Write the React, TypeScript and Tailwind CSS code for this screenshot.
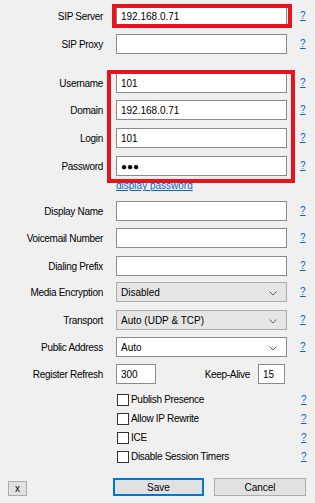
import React from 'react';

const font = { fontFamily: '"Liberation Sans", Arial, sans-serif' };

const Help: React.FC = () => (
  <a className="ml-[13px] text-[10px] text-[#0066cc] underline leading-none">?</a>
);

const Chevron: React.FC = () => (
  <svg width="8" height="5" viewBox="0 0 8 5" className="absolute right-[9px] top-[8px]">
    <path d="M0.5 0.5 L4 4 L7.5 0.5" fill="none" stroke="#606060" strokeWidth="1" />
  </svg>
);

type FieldProps = {
  label: string;
  value?: string;
  kind?: 'text' | 'select' | 'combo';
  className?: string;
};

const Field: React.FC<FieldProps> = ({ label, value = '', kind = 'text', className = '' }) => {
  const box =
    kind === 'select'
      ? 'bg-[#e5e5e5] border-[#adadad]'
      : 'bg-white border-[#8a8a8a]';
  return (
    <div className={`flex items-center h-5 ${className}`}>
      <div className="w-[103px] text-right text-[10px] tracking-[-0.3px] text-black whitespace-nowrap">{label}</div>
      <div className={`relative ml-[13px] w-[171px] h-5 border ${box} flex items-center pl-[4px] text-[10px] text-black`}>
        {value}
        {kind !== 'text' && <Chevron />}
      </div>
      <Help />
    </div>
  );
};

const Check: React.FC<{ label: string }> = ({ label }) => (
  <div className="flex items-center h-[19px]">
    <div className="w-[117px]" />
    <div className="w-[12px] h-[12px] border border-[#333] bg-white" />
    <div className="ml-[2px] w-[170px] text-[10px] tracking-[-0.3px] text-black">{label}</div>
    <a className="text-[10px] text-[#0066cc] underline leading-none">?</a>
  </div>
);

const App: React.FC = () => {
  return (
    <div className="relative w-[315px] h-[503px] bg-[#f0f0f0] overflow-hidden" style={font}>
      <div className="flex flex-col pt-[6px]">
        <Field label="SIP Server" value="192.168.0.71" />
        <Field label="SIP Proxy" className="mt-[8px]" />
        <Field label="Username" value="101" className="mt-[19px]" />
        <Field label="Domain" value="192.168.0.71" className="mt-[7px]" />
        <Field label="Login" value="101" className="mt-[8px]" />
        <Field label="Password" value="●●●" className="mt-[8px]" />
        <div className="h-[12px] mt-[4px] pl-[116px] text-[10px] leading-[12px] text-[#0066cc] underline">
          display password
        </div>
        <Field label="Display Name" className="mt-[9px]" />
        <Field label="Voicemail Number" className="mt-[7px]" />
        <Field label="Dialing Prefix" className="mt-[8px]" />
        <Field label="Media Encryption" value="Disabled" kind="select" className="mt-[6px]" />
        <Field label="Transport" value="Auto (UDP & TCP)" kind="select" className="mt-[8px]" />
        <Field label="Public Address" value="Auto" kind="combo" className="mt-[7px]" />

        <div className="flex items-center h-5 mt-[7px]">
          <div className="w-[103px] text-right text-[10px] tracking-[-0.3px] text-black whitespace-nowrap">Register Refresh</div>
          <div className="ml-[13px] w-[40px] h-5 border border-[#8a8a8a] bg-white flex items-center pl-[4px] text-[10px]">300</div>
          <div className="w-[94px] text-right text-[10px] tracking-[-0.3px] text-black">Keep-Alive</div>
          <div className="ml-[8px] w-[27px] h-5 border border-[#8a8a8a] bg-white flex items-center pl-[4px] text-[10px]">15</div>
        </div>

        <div className="flex flex-col mt-[6px]">
          <Check label="Publish Presence" />
          <Check label="Allow IP Rewrite" />
          <Check label="ICE" />
          <Check label="Disable Session Timers" />
        </div>

        <div className="flex items-end h-[18px] mt-[12px]">
          <button className="ml-[8px] w-[19px] h-[15px] bg-[#e1e1e1] border border-[#adadad] text-[10px] leading-none flex items-center justify-center">
            x
          </button>
          <button className="ml-[86px] w-[91px] h-[18px] bg-[#e1e1e1] border-2 border-[#0078d7] text-[10px] flex items-center justify-center">
            Save
          </button>
          <button className="ml-[10px] w-[92px] h-[18px] bg-[#e1e1e1] border border-[#adadad] text-[10px] flex items-center justify-center">
            Cancel
          </button>
        </div>
      </div>

      {/* red annotation boxes */}
      <div className="absolute left-[112px] top-[4px] w-[180px] h-[24px] border-4 border-[#e8131b] pointer-events-none" />
      <div className="absolute left-[107px] top-[70px] w-[188px] h-[113px] border-4 border-[#e8131b] pointer-events-none" />
    </div>
  );
};

export default App;
